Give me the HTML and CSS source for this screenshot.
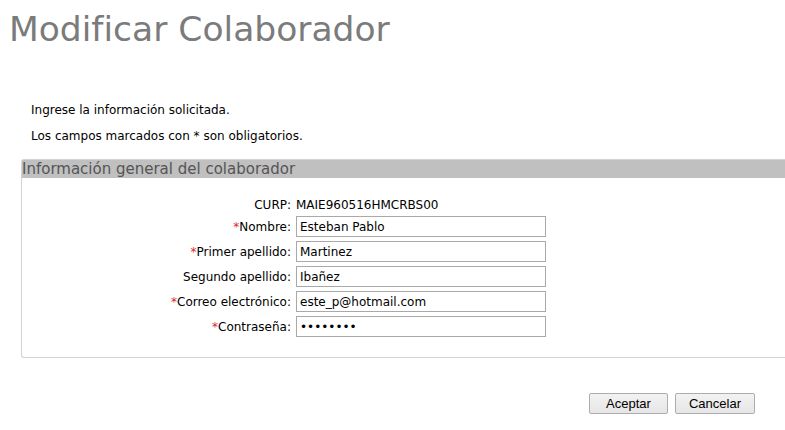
FILE: index.html
```html
<!DOCTYPE html>
<html lang="es">
<head>
<meta charset="utf-8">
<link rel="stylesheet" href="styles.css">
</head>
<body>
<h1 class="title">Modificar Colaborador</h1>
<div class="intro">
  <p>Ingrese la información solicitada.</p>
  <p>Los campos marcados con * son obligatorios.</p>
</div>
<div class="panel">
  <div class="panel-head">Información general del colaborador</div>
  <div class="form">
    <div class="label">CURP:</div>
    <div class="value">MAIE960516HMCRBS00</div>
    <div class="label"><span class="req">*</span>Nombre:</div>
    <div class="field"><input class="input" type="text" value="Esteban Pablo"></div>
    <div class="label"><span class="req">*</span>Primer apellido:</div>
    <div class="field"><input class="input" type="text" value="Martinez"></div>
    <div class="label">Segundo apellido:</div>
    <div class="field"><input class="input" type="text" value="Ibañez"></div>
    <div class="label"><span class="req">*</span>Correo electrónico:</div>
    <div class="field"><input class="input" type="text" value="este_p@hotmail.com"></div>
    <div class="label"><span class="req">*</span>Contraseña:</div>
    <div class="field"><input class="input" type="password" value="12345678"></div>
  </div>
</div>
<div class="actions">
  <button class="btn btn-ok" type="button">Aceptar</button>
  <button class="btn btn-cancel" type="button">Cancelar</button>
</div>
</body>
</html>
```
FILE: styles.css
```css
body {
  margin: 8px 0 8px 8px;
  font-family: "DejaVu Sans", Verdana, sans-serif;
  font-size: 12px;
  color: #000;
  background: #fff;
}
.title {
  margin: 0 0 0 1px;
  font-size: 34.5px;
  font-weight: normal;
  color: #7b7b7b;
  line-height: 42px;
}
.intro {
  margin: 53px 0 0 23px;
}
.intro p {
  margin: 0 0 12px 0;
  line-height: 14px;
}
.intro p:last-child {
  margin-bottom: 16px;
}
.panel {
  margin: 0 0 0 13px;
  border: 1px solid #d3d3d3;
  border-right: none;
  border-radius: 3px 0 0 3px;
  padding-bottom: 20px;
}
.panel-head {
  background: #c0c0c0;
  color: #555;
  font-size: 15px;
  line-height: 18px;
}
.form {
  display: grid;
  grid-template-columns: 269px 250px;
  column-gap: 5px;
  row-gap: 4px;
  padding-top: 20px;
  align-items: center;
}
.label {
  text-align: right;
  line-height: 14px;
}
.req {
  color: #e0262b;
}
.value {
  line-height: 14px;
}
.field {
  display: flex;
}
.input {
  box-sizing: border-box;
  width: 250px;
  height: 21px;
  margin: 0;
  padding: 1px 3px;
  border: 1px solid #a9a9a9;
  font-family: "DejaVu Sans", Verdana, sans-serif;
  font-size: 12px;
  color: #000;
  background: #fff;
}
.actions {
  display: flex;
  justify-content: flex-end;
  gap: 7px;
  margin-top: 35px;
  padding-right: 30px;
}
.btn {
  box-sizing: border-box;
  height: 21px;
  padding: 0 8px;
  font-family: "Liberation Sans", Arial, sans-serif;
  font-size: 13px;
  color: #000;
  background: linear-gradient(#f2f2f2, #e6e6e6);
  border: 1px solid #adadad;
  border-radius: 2px;
}
.btn-ok {
  width: 79px;
}
.btn-cancel {
  width: 80px;
}
```
